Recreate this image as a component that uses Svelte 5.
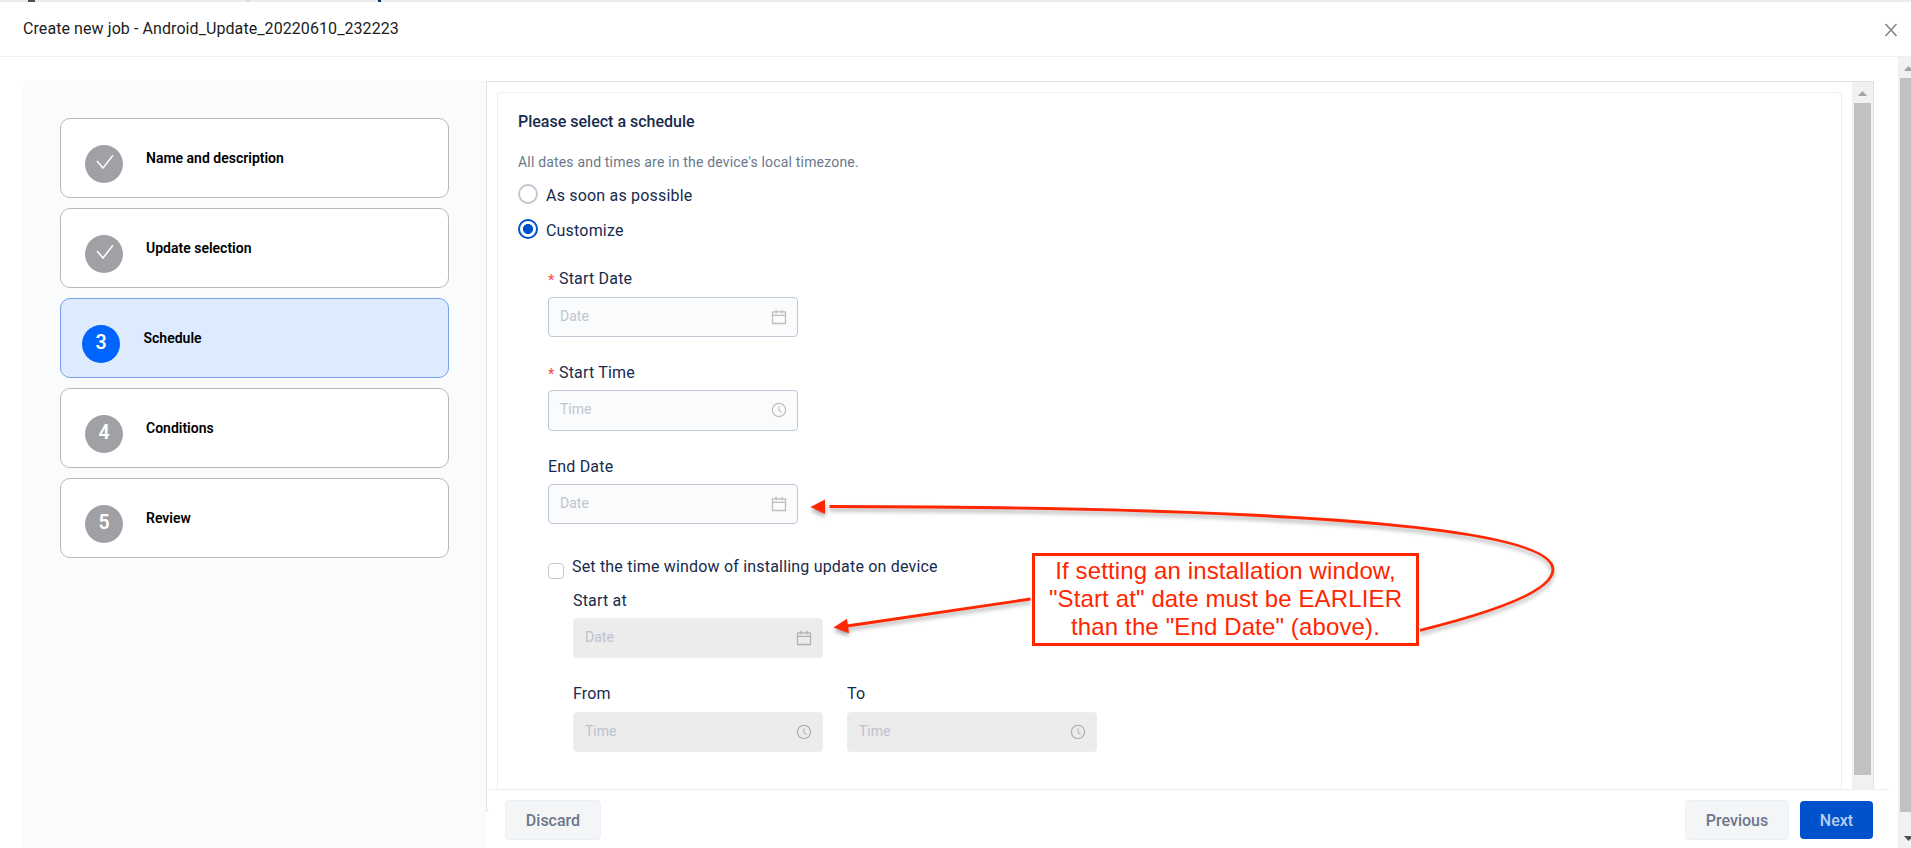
<script>
  const steps = [
    { n: 1, title: 'Name and description', state: 'done' },
    { n: 2, title: 'Update selection', state: 'done' },
    { n: 3, title: 'Schedule', state: 'active' },
    { n: 4, title: 'Conditions', state: 'todo' },
    { n: 5, title: 'Review', state: 'todo' }
  ];
</script>

{#snippet field(kind, disabled)}
  <div class="input" class:disabled>
    <span>{kind === 'date' ? 'Date' : 'Time'}</span>
    {#if kind === 'date'}
      <svg width="16" height="16" viewBox="64 64 896 896" fill="currentColor"><path d="M880 184H712v-64c0-4.400-3.600-8-8-8h-56c-4.400 0-8 3.600-8 8v64H384v-64c0-4.400-3.600-8-8-8h-56c-4.400 0-8 3.600-8 8v64H144c-17.700 0-32 14.300-32 32v664c0 17.700 14.300 32 32 32h736c17.700 0 32-14.300 32-32V216c0-17.700-14.300-32-32-32zm-40 656H184V460h656v380zM184 392V256h128v48c0 4.400 3.600 8 8 8h56c4.400 0 8-3.600 8-8v-48h256v48c0 4.400 3.600 8 8 8h56c4.400 0 8-3.600 8-8v-48h128v136H184z" /></svg>
    {:else}
      <svg width="16" height="16" viewBox="64 64 896 896" fill="currentColor"><path d="M512 64C264.600 64 64 264.600 64 512s200.600 448 448 448 448-200.600 448-448S759.400 64 512 64zm0 820c-205.400 0-372-166.600-372-372s166.600-372 372-372 372 166.600 372 372-166.600 372-372 372z" transform="translate(56 56) scale(.89)" /><path transform="translate(56 56) scale(.89)" d="M686.700 638.600L544.100 535.500V288c0-4.400-3.600-8-8-8H488c-4.400 0-8 3.600-8 8v275.400c0 2.600 1.200 5 3.300 6.500l165.400 120.600c3.600 2.600 8.600 1.800 11.200-1.700l28.600-39c2.600-3.700 1.800-8.700-1.800-11.200z" /></svg>
    {/if}
  </div>
{/snippet}

<div class="page">
  <div class="strip"><i class="m1"></i><i class="m2"></i><i class="m3"></i></div>
  <header>
    <h1>Create new job - Android_Update_20220610_232223</h1>
    <svg width="14" height="14" viewBox="0 0 14 14" fill="none" stroke="#808285" stroke-width="1.500"><path d="M1.500 1L12.500 13M12.500 1L1.500 13" /></svg>
  </header>

  <div class="body">
    <div class="main">
      <nav>
        {#each steps as s (s.n)}
          <div class="step {s.state}">
            <div class="dot">
              {#if s.state === 'done'}
                <svg width="18" height="16" viewBox="0 0 18 16" fill="none" stroke="#fff" stroke-width="1.500"><path d="M1 7L7 14L17 1.200" /></svg>
              {:else}
                {s.n}
              {/if}
            </div>
            <div class="step-title">{s.title}</div>
          </div>
        {/each}
      </nav>

      <div class="right">
        <div class="panel">
          <div class="card">
            <h2>Please select a schedule</h2>
            <p class="note">All dates and times are in the device's local timezone.</p>
            <div class="radio"><i></i><span>As soon as possible</span></div>
            <div class="radio checked"><i></i><span>Customize</span></div>
            <div class="form">
              <div class="group">
                <div class="label"><b>*</b>Start Date</div>
                {@render field('date', false)}
              </div>
              <div class="group time">
                <div class="label"><b>*</b>Start Time</div>
                {@render field('time', false)}
              </div>
              <div class="group end">
                <div class="label">End Date</div>
                {@render field('date', false)}
              </div>
              <div class="check"><i></i><span>Set the time window of installing update on device</span></div>
              <div class="window">
                <div class="group end">
                  <div class="label">Start at</div>
                  {@render field('date', true)}
                </div>
                <div class="pair">
                  <div class="group">
                    <div class="label">From</div>
                    {@render field('time', true)}
                  </div>
                  <div class="group">
                    <div class="label">To</div>
                    {@render field('time', true)}
                  </div>
                </div>
              </div>
            </div>
          </div>
          <div class="bar inner">
            <svg width="9" height="5" viewBox="0 0 9 5"><path d="M0 5L4.500 0L9 5z" fill="#a3a3a3" /></svg>
            <div class="thumb"></div>
          </div>
        </div>
        <div class="foot-row">
          <div class="stub"></div>
          <footer>
            <button>Discard</button>
            <div class="spacer"></div>
            <button>Previous</button>
            <button class="primary">Next</button>
          </footer>
        </div>
      </div>
    </div>

    <div class="bar outer">
      <svg width="9" height="5" viewBox="0 0 9 5"><path d="M0 5L4.500 0L9 5z" fill="#a3a3a3" /></svg>
      <div class="thumb"></div>
      <svg class="down" width="9" height="5" viewBox="0 0 9 5"><path d="M0 0L4.500 5L9 0z" fill="#505050" /></svg>
    </div>
  </div>

  <svg class="arrows" width="1911" height="848" viewBox="0 0 1911 848">
    <g fill="none" stroke="#ff2600" stroke-width="2.800">
      <path d="M829.500 506.500C1190 507 1553 520 1553 569.500C1553 592 1490 613 1420 630.300" />
      <path d="M1030.500 599L847 626" />
    </g>
    <g fill="#ff2600">
      <path d="M810.500 507L825 499.500V514z" />
      <path d="M833.500 627.500L847 618.700L849 633.300z" />
    </g>
  </svg>
  <div class="callout">If setting an installation window,<br />"Start at" date must be EARLIER<br />than the "End Date" (above).</div>
</div>

<style>
  :global(body) { margin: 0; overflow: hidden; background: #fff; }
  .page, .page * { box-sizing: border-box; }
  .page {
    position: relative;
    width: 1911px;
    height: 848px;
    overflow: hidden;
    display: flex;
    flex-direction: column;
    font-family: Roboto, "Liberation Sans", sans-serif;
    color: #172b4d;
  }
  .strip { height: 2px; flex: none; background: #ebebeb; display: flex; }
  .strip i { height: 2px; }
  .m1 { width: 7px; margin-left: 28px; background: #4b5060; }
  .m2 { width: 4px; margin-left: 211px; background: #dcdcdc; }
  .m3 { width: 3px; margin-left: 128px; background: #10335c; }
  header {
    height: 55px;
    flex: none;
    display: flex;
    justify-content: space-between;
    padding: 0 13px 0 23px;
    border-bottom: 1px solid #ebeff7;
  }
  header h1 { margin: 15px 0 0; font-size: 16px; line-height: 24px; font-weight: 400; color: #1c1c1c; letter-spacing: 0.08px; }
  header svg { margin-top: 21px; }
  .body { flex: 1; display: flex; min-height: 0; }
  .main { flex: 1; display: flex; padding: 24px 0 0 23px; }
  nav { width: 463px; background: #fafbfd; padding: 37px 37px 0; display: flex; flex-direction: column; gap: 10px; }
  .step { height: 80px; width: 389px; border: 1px solid #b9b9b9; border-radius: 10px; background: #fff; display: flex; padding-left: 24px; }
  .step.active { background: #deebff; border-color: #74a1e8; padding-left: 21px; }
  .dot {
    width: 38px; height: 38px; margin-top: 26px; border-radius: 50%; background: #a0a1a5; color: #fff;
    display: flex; justify-content: center; font-size: 19.500px; line-height: 36px; font-weight: 600;
  }
  .dot svg { margin: 9px 0 0 1px; }
  .active .dot { background: #0065ff; }
  .step-title { margin: 29px 0 0 23px; font-size: 14px; line-height: 20px; font-weight: 600; color: #000; }
  .active .step-title { margin-left: 23.500px; }

  .right { width: 1412px; display: flex; flex-direction: column; }
  .panel { width: 1388px; height: 708px; border: 1px solid #dfe1e4; border-bottom: 0; display: flex; padding-left: 10px; }
  .card { width: 1345px; margin: 10px 10px 0 0; border: 1px solid #ebeff7; border-bottom: 0; border-radius: 4px 4px 0 0; padding: 0 20px; }
  h2 { margin: 17px 0 0; font-size: 16px; line-height: 24px; font-weight: 500; }
  .note { margin: 18px 0 0; font-size: 14px; line-height: 20px; color: #6b778c; letter-spacing: 0.18px; }
  .radio { display: flex; height: 20px; margin-top: 15px; font-size: 16px; line-height: 24px; }
  .note + .radio { margin-top: 12px; }
  .radio i { width: 20px; height: 20px; border: 2px solid #c1c7d0; border-radius: 50%; margin-right: 8px; }
  .radio.checked i { border-color: #0052cc; background: radial-gradient(circle, #0052cc 4.800px, #fff 5.300px); }
  .radio span, .label, .check span { letter-spacing: 0.19px; }
  .form { padding: 26px 0 0 30px; }
  .group { height: 93.400px; width: 250px; }
  .label { height: 32px; font-size: 16px; line-height: 27px; display: flex; }
  .label b { width: 11px; font-size: 14px; font-weight: 500; color: #ff4d4f; line-height: 31px; }
  .time .label, .end .label { padding-top: 1px; }
  .time .input { height: 41px; }
  .input {
    height: 40px; border: 1px solid #c1c7d5; border-radius: 4px; background: #fafbfd;
    display: flex; justify-content: space-between; padding: 0 10px 0 11px; font-size: 14px; line-height: 37px; color: #c1c5cf;
  }
  .input svg { color: #bdbdbd; margin-top: 11px; }
  .input.disabled { background: #ececec; border-color: #ebeef5; color: #bcc2ce; }
  .input.disabled svg { color: #b0b0b0; }
  .check { display: flex; gap: 8px; margin: 9.800px 0 5px; height: 26px; font-size: 16px; line-height: 23px; }
  .check i { width: 16px; height: 16px; margin-top: 8px; border: 1px solid #c1c7d5; border-radius: 4px; flex: none; }
  .window { padding-left: 25px; }
  .window .group { height: 94px; }
  .pair { display: flex; gap: 24px; }

  .bar { background: #f1f1f1; display: flex; flex-direction: column; align-items: center; }
  .inner { width: 21px; }
  .inner svg { margin: 9px 0 7px; flex: none; }
  .inner .thumb { width: 17px; height: 672px; background: #c1c1c1; }
  .outer { width: 13px; flex: none; align-items: flex-start; }
  .outer svg { margin: 9px 0 7px 6px; flex: none; }
  .outer .thumb { width: 11px; height: 734px; margin-left: 2px; background: #c1c1c1; flex: none; }
  .outer .down { margin: 24px 0 0 6px; }

  .foot-row { flex: 1; display: flex; }
  .stub { width: 3px; height: 22px; border-left: 1px solid #dfe1e4; border-bottom: 1px solid #dfe1e4; }
  footer { width: 1401px; border-top: 1px solid #ebeff3; padding: 10px 17px 0 16px; display: flex; gap: 11px; }
  .spacer { flex: 1; }
  button {
    font: 500 16px/24px Roboto, sans-serif; height: 40px; width: 104px; padding: 1px 0 0; color: #6b778c;
    background: #f4f5f7; border: 1px solid #ebeff7; border-radius: 4px;
  }
  button:first-child { width: 96px; }
  button.primary { width: 73px; height: 38px; margin-top: 1px; background: #0052cc; border: 0; color: #b9cdf0; }

  .arrows { position: absolute; left: 0; top: 0; filter: drop-shadow(0 3px 2px rgba(0, 0, 0, 0.35)); }
  .callout {
    position: absolute; left: 1032px; top: 553px; width: 387px; height: 93px; border: 3px solid #ff2600; background: #fff;
    color: #ff2600; font: 24px/28px "Liberation Sans", sans-serif; text-align: center; padding-top: 1px; white-space: nowrap;
    letter-spacing: 0.130px;
  }
</style>
